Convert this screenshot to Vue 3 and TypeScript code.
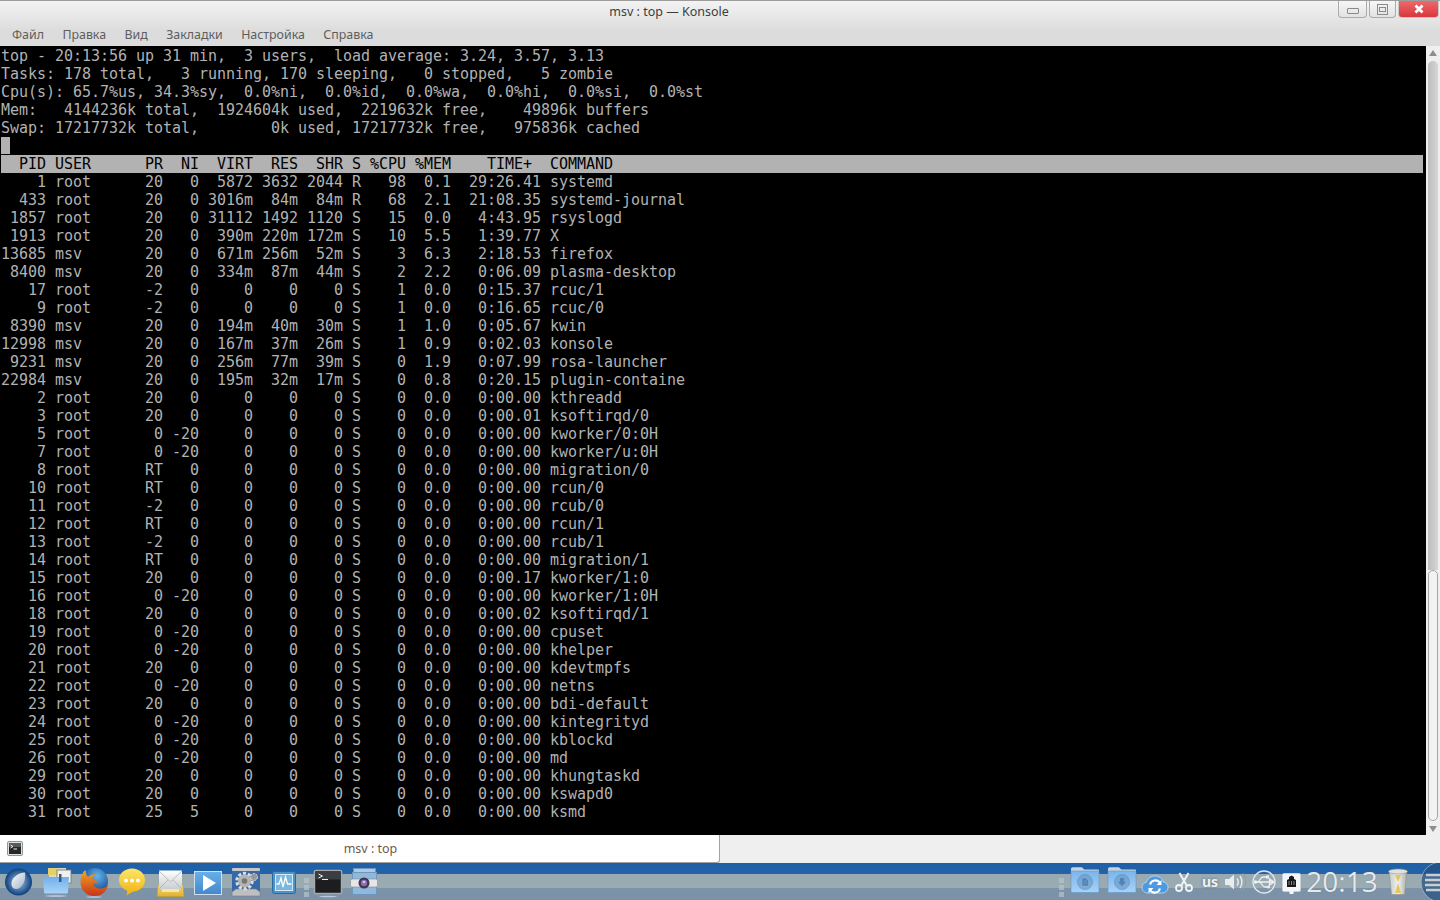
<script setup lang="ts">
const menus: string[] = ['Файл', 'Правка', 'Вид', 'Закладки', 'Настройка', 'Справка']

const summary: string[] = [
  'top - 20:13:56 up 31 min,  3 users,  load average: 3.24, 3.57, 3.13',
  'Tasks: 178 total,   3 running, 170 sleeping,   0 stopped,   5 zombie',
  'Cpu(s): 65.7%us, 34.3%sy,  0.0%ni,  0.0%id,  0.0%wa,  0.0%hi,  0.0%si,  0.0%st',
  'Mem:   4144236k total,  1924604k used,  2219632k free,    49896k buffers',
  'Swap: 17217732k total,        0k used, 17217732k free,   975836k cached',
]

const header = '  PID USER      PR  NI  VIRT  RES  SHR S %CPU %MEM    TIME+  COMMAND'

const full: string[] = [
  '1 root 20 0 5872 3632 2044 R 98 0.1 29:26.41 systemd',
  '433 root 20 0 3016m 84m 84m R 68 2.1 21:08.35 systemd-journal',
  '1857 root 20 0 31112 1492 1120 S 15 0.0 4:43.95 rsyslogd',
  '1913 root 20 0 390m 220m 172m S 10 5.5 1:39.77 X',
  '13685 msv 20 0 671m 256m 52m S 3 6.3 2:18.53 firefox',
  '8400 msv 20 0 334m 87m 44m S 2 2.2 0:06.09 plasma-desktop',
  '17 root -2 0 0 0 0 S 1 0.0 0:15.37 rcuc/1',
  '9 root -2 0 0 0 0 S 1 0.0 0:16.65 rcuc/0',
  '8390 msv 20 0 194m 40m 30m S 1 1.0 0:05.67 kwin',
  '12998 msv 20 0 167m 37m 26m S 1 0.9 0:02.03 konsole',
  '9231 msv 20 0 256m 77m 39m S 0 1.9 0:07.99 rosa-launcher',
  '22984 msv 20 0 195m 32m 17m S 0 0.8 0:20.15 plugin-containe',
]

const kernel: [number, string, string, string, string][] = [
  [2, '20', '0', '0:00.00', 'kthreadd'],
  [3, '20', '0', '0:00.01', 'ksoftirqd/0'],
  [5, '0', '-20', '0:00.00', 'kworker/0:0H'],
  [7, '0', '-20', '0:00.00', 'kworker/u:0H'],
  [8, 'RT', '0', '0:00.00', 'migration/0'],
  [10, 'RT', '0', '0:00.00', 'rcun/0'],
  [11, '-2', '0', '0:00.00', 'rcub/0'],
  [12, 'RT', '0', '0:00.00', 'rcun/1'],
  [13, '-2', '0', '0:00.00', 'rcub/1'],
  [14, 'RT', '0', '0:00.00', 'migration/1'],
  [15, '20', '0', '0:00.17', 'kworker/1:0'],
  [16, '0', '-20', '0:00.00', 'kworker/1:0H'],
  [18, '20', '0', '0:00.02', 'ksoftirqd/1'],
  [19, '0', '-20', '0:00.00', 'cpuset'],
  [20, '0', '-20', '0:00.00', 'khelper'],
  [21, '20', '0', '0:00.00', 'kdevtmpfs'],
  [22, '0', '-20', '0:00.00', 'netns'],
  [23, '20', '0', '0:00.00', 'bdi-default'],
  [24, '0', '-20', '0:00.00', 'kintegrityd'],
  [25, '0', '-20', '0:00.00', 'kblockd'],
  [26, '0', '-20', '0:00.00', 'md'],
  [29, '20', '0', '0:00.00', 'khungtaskd'],
  [30, '20', '0', '0:00.00', 'kswapd0'],
  [31, '25', '5', '0:00.00', 'ksmd'],
]

function fmt(p: string[]): string {
  const [pid, user, pr, ni, virt, res, shr, s, cpu, mem, time, cmd] = p
  return (
    pid.padStart(5) + ' ' + user.padEnd(9) + pr.padStart(3) + ' ' + ni.padStart(3) + ' ' +
    virt.padStart(5) + ' ' + res.padStart(4) + ' ' + shr.padStart(4) + ' ' + s + ' ' +
    cpu.padStart(4) + ' ' + mem.padStart(4) + ' ' + time.padStart(9) + ' ' + cmd
  )
}

const rows: string[] = [
  ...full.map((r) => fmt(r.split(' '))),
  ...kernel.map(([pid, pr, ni, time, cmd]) =>
    fmt([String(pid), 'root', pr, ni, '0', '0', '0', 'S', '0', '0.0', time, cmd]),
  ),
]
</script>

<template>
  <div class="win">
    <header class="chrome">
      <div class="titlebar">
        <div class="title">msv : top — Konsole</div>
        <div class="wbtns">
          <div class="wbtn min"><span class="min-glyph"></span></div>
          <div class="wbtn max"><span class="max-glyph"><span></span></span></div>
          <div class="wbtn close">
            <svg width="10" height="10" viewBox="0 0 10 10">
              <path d="M1.5 1.5 8.5 8.5M8.5 1.5 1.5 8.5" stroke="#fff" stroke-width="2.8" fill="none" />
            </svg>
          </div>
        </div>
      </div>
      <nav class="menu">
        <span v-for="m in menus" :key="m">{{ m }}</span>
      </nav>
    </header>

    <main class="body">
      <section class="term">
        <div v-for="l in summary" :key="l" class="ln">{{ l }}</div>
        <div class="ln"><span class="cursor"> </span></div>
        <div class="ln head">{{ header }}</div>
        <div v-for="r in rows" :key="r" class="ln">{{ r }}</div>
      </section>
      <aside class="scroll">
        <div class="arrow up"></div>
        <div class="groove"></div>
        <div class="thumb"></div>
        <div class="arrow down"></div>
      </aside>
    </main>

    <div class="tabs">
      <div class="tab">
        <svg class="tabicon" width="16" height="15" viewBox="0 0 16 15">
          <rect x="0.5" y="0.5" width="15" height="14" rx="1.5" fill="#dfe1e1" stroke="#8f9496" />
          <rect x="2" y="2" width="12" height="11" fill="#24282b" />
          <rect x="2" y="2" width="12" height="4" fill="#565b5f" />
          <path d="M3.500 4 6 5.500 3.500 7M6.500 8H10" stroke="#f0f0f0" fill="none" />
        </svg>
        <span class="tabtext">msv : top</span>
      </div>
    </div>

    <footer class="panel">
      <div class="group">
        <svg class="i w37" viewBox="0 0 37 37">
          <defs>
            <radialGradient id="orb" cx="0.5" cy="0.5" r="0.55">
              <stop offset="0.35" stop-color="#6a93bd" />
              <stop offset="0.8" stop-color="#1d4f8c" />
              <stop offset="1" stop-color="#12325c" />
            </radialGradient>
            <linearGradient id="crescent" x1="0" y1="0" x2="1" y2="1">
              <stop offset="0" stop-color="#fff" />
              <stop offset="1" stop-color="#9fb2c6" />
            </linearGradient>
          </defs>
          <circle cx="18.5" cy="19" r="13.5" fill="url(#orb)" />
          <path d="M25 9.500c1 6-1 13-6.500 16-4.500 1.500-7.500-1.500-7-5.500.5-5.500 6.500-10 13.500-10.500z" fill="url(#crescent)" />
        </svg>

        <svg class="i w38" viewBox="0 0 38 37">
          <defs>
            <linearGradient id="fold" x1="0" y1="0" x2="0" y2="1">
              <stop offset="0" stop-color="#6fb0ec" />
              <stop offset="1" stop-color="#a9d3f7" />
            </linearGradient>
          </defs>
          <rect x="12" y="5" width="17" height="13" fill="#d9d9c8" />
          <rect x="11" y="5" width="9" height="7" fill="#e4cf6c" />
          <rect x="20" y="7" width="14" height="13" fill="#f0f0f0" stroke="#776" stroke-width="0.8" />
          <path d="M6 14h26l-1 15a1.500 1.500 0 0 1-1.500 1.500H8.500A1.500 1.500 0 0 1 7 29z" fill="url(#fold)" />
          <rect x="22" y="11" width="2.500" height="8" fill="#3e5a78" />
          <ellipse cx="19" cy="33" rx="11" ry="0.8" fill="#cfe3f2" opacity="0.8" />
        </svg>

        <svg class="i w38" viewBox="0 0 38 37">
          <defs>
            <radialGradient id="ffb" cx="0.6" cy="0.3" r="0.6">
              <stop offset="0" stop-color="#62b6ea" />
              <stop offset="1" stop-color="#1b4b94" />
            </radialGradient>
            <linearGradient id="ffo" x1="0" y1="0" x2="0" y2="1">
              <stop offset="0" stop-color="#f2a522" />
              <stop offset="1" stop-color="#c8341a" />
            </linearGradient>
          </defs>
          <circle cx="19.500" cy="18.500" r="13.500" fill="url(#ffb)" />
          <path d="M9 8C7 11 5.500 14 5.500 19c0 8 6 14 14 14 7.500 0 12.500-5 13.500-11-2 2.500-5 4-8.500 3.500-4-.5-6.500-3-6.500-5 2 .2 4.500-.2 5-2-2-1.500-5-1-5.500-3 .5-2 2.500-3 4-4-3-1-6.500.5-8.500 2.500C11.500 12 10.500 10.500 11 7.500z" fill="url(#ffo)" />
          <ellipse cx="19" cy="34" rx="8" ry="0.7" fill="#d8e6ee" opacity="0.7" />
        </svg>

        <svg class="i w38" viewBox="0 0 38 37">
          <defs>
            <linearGradient id="bub" x1="0" y1="0" x2="0" y2="1">
              <stop offset="0" stop-color="#ffe768" />
              <stop offset="1" stop-color="#f0b010" />
            </linearGradient>
          </defs>
          <path d="M19 5.500c7.200 0 13 5 13 11.500S26.200 28.500 21 28.500c-2 0-3 2-8 4 1.200-2 1.500-3.500 1-5C9 25.500 6 21.500 6 17 6 10.500 11.800 5.500 19 5.500z" fill="url(#bub)" />
          <circle cx="13" cy="17.500" r="2" fill="#fff" />
          <circle cx="19" cy="17.500" r="2" fill="#fff" />
          <circle cx="25" cy="17.500" r="2" fill="#fff" />
        </svg>

        <svg class="i w38" viewBox="0 0 38 37">
          <defs>
            <linearGradient id="env" x1="0" y1="0" x2="0" y2="1">
              <stop offset="0" stop-color="#fff" />
              <stop offset="1" stop-color="#c8cccc" />
            </linearGradient>
            <linearGradient id="tray" x1="0" y1="0" x2="0" y2="1">
              <stop offset="0" stop-color="#f8da70" />
              <stop offset="1" stop-color="#e0b030" />
            </linearGradient>
          </defs>
          <path d="M7 22 6 33.500H33L32 22z" fill="url(#tray)" stroke="#c89a20" stroke-width="0.6" />
          <rect x="8" y="7.500" width="23" height="19" fill="url(#env)" />
          <path d="M8 8 19.500 19 31 8M8 26l9-9M31 26l-9-9" stroke="#aab0b2" stroke-width="0.8" fill="none" />
          <rect x="11" y="26" width="17" height="3" fill="#f6e6a8" />
        </svg>

        <svg class="i w38" viewBox="0 0 38 37">
          <defs>
            <linearGradient id="play" x1="0" y1="0" x2="0" y2="1">
              <stop offset="0" stop-color="#68b0e8" />
              <stop offset="1" stop-color="#4488cc" />
            </linearGradient>
          </defs>
          <rect x="5.500" y="8.500" width="27" height="23" fill="url(#play)" stroke="#cfe1f0" />
          <path d="M14 12 27 20 14 28z" fill="#fff" />
        </svg>

        <svg class="i w38" viewBox="0 0 38 37">
          <path d="M5 8h28v23H5z" fill="#3569a8" />
          <rect x="5" y="5" width="28" height="3" rx="1" fill="#c8c8c8" />
          <path d="M9 26h20l4 3v4H5v-4z" fill="#bfbfbf" stroke="#7c7c7c" stroke-width="0.6" />
          <circle cx="17.500" cy="18" r="7.500" fill="none" stroke="#dcdcdc" stroke-width="3.500" stroke-dasharray="3 1.800" />
          <circle cx="17.500" cy="18" r="6.500" fill="#b4b4b4" />
          <circle cx="17.500" cy="18" r="2.800" fill="#777" />
          <circle cx="27" cy="14" r="3.500" fill="#999" stroke="#ddd" stroke-dasharray="2 1" />
        </svg>

        <svg class="i w38" viewBox="0 0 38 37">
          <rect x="7.500" y="8.500" width="23" height="22" rx="2" fill="#4d93c8" stroke="#2a6a9e" />
          <rect x="10.500" y="11.500" width="17" height="16" fill="#7ab6df" stroke="#d4e8f5" />
          <path d="M11.500 21H14l2-6 2 9 2.500-10 2 7h4" stroke="#fff" stroke-width="1.300" fill="none" />
        </svg>

        <div class="sep sep-l"><i></i><i></i><i></i></div>

        <svg class="i w36" viewBox="0 0 36 37">
          <rect x="4.500" y="7.500" width="27" height="23" rx="1" fill="#1b1d1f" stroke="#a8a8a8" stroke-width="1.500" />
          <rect x="5.500" y="8.500" width="25" height="8" fill="#3a3e42" />
          <path d="M8.500 11 12.500 13 8.500 15M12 16.500h6" stroke="#f0f0f0" fill="none" />
          <ellipse cx="18" cy="33.500" rx="9" ry="0.7" fill="#cfe3f2" opacity="0.7" />
        </svg>

        <svg class="i w36" viewBox="0 0 36 37">
          <rect x="7.500" y="5.500" width="22" height="7" fill="#a9cbe8" stroke="#6f95b8" />
          <rect x="6.500" y="9.500" width="24" height="22" fill="#8fb8dc" stroke="#6f95b8" />
          <rect x="4.500" y="16" width="27" height="8" rx="1.500" fill="#e6e6e6" stroke="#888" stroke-width="0.6" />
          <circle cx="18" cy="20" r="5.500" fill="#3c3850" />
          <circle cx="18" cy="20" r="3.200" fill="#8e6bb0" />
          <circle cx="18" cy="19" r="1.300" fill="#d9c3ea" />
        </svg>
      </div>

      <div class="group">
        <div class="sep sep-r"><i></i><i></i><i></i></div>

        <svg class="i w36" viewBox="0 2 36 37">
          <defs>
            <linearGradient id="pf" x1="0" y1="0" x2="0" y2="1">
              <stop offset="0" stop-color="#7ab5ea" />
              <stop offset="1" stop-color="#a8d2f6" />
            </linearGradient>
          </defs>
          <path d="M4 8c0-1 .8-1.800 1.800-1.800h9l2.500 2.300H31a1 1 0 0 1 1 1v3H4z" fill="#c4d5e2" />
          <rect x="4" y="10" width="28" height="21.500" rx="1" fill="url(#pf)" stroke="#5f98cc" stroke-width="0.6" />
          <circle cx="18" cy="21" r="7.500" fill="#5e94c6" opacity="0.55" stroke="#5283b2" />
          <path d="M15 17h4l2.500 2.500V25H15zM17 20h2.500M17 22h2.500" fill="#5283b2" stroke="#8cb6dc" stroke-width="0.5" />
        </svg>

        <svg class="i w37" viewBox="-1 2 37 37">
          <path d="M4 8c0-1 .8-1.800 1.800-1.800h9l2.500 2.300H31a1 1 0 0 1 1 1v3H4z" fill="#c4d5e2" />
          <rect x="4" y="10" width="28" height="21.500" rx="1" fill="url(#pf)" stroke="#5f98cc" stroke-width="0.6" />
          <circle cx="18" cy="21" r="7.500" fill="#5e94c6" opacity="0.55" stroke="#5283b2" />
          <path d="M15.500 16.500h5v4H23L18 25.500 13 20.500h2.500z" fill="#5283b2" stroke="#8cb6dc" stroke-width="0.5" />
        </svg>

        <svg class="i w30" viewBox="0 1 30 37">
          <path d="M8 31c-3.500 0-6-2.500-6-5.500 0-2.800 2-5 4.500-5.400C7.500 16.500 11 14 15 14c4.200 0 7.500 2.600 8.400 6 2.800.3 4.600 2.800 4.600 5.500 0 3-2.500 5.500-5.500 5.500z" fill="#4d9ae0" stroke="#d5e8f8" stroke-width="0.7" />
          <path d="M10 22.500A5.500 5.500 0 0 1 20 21M20 26.500a5.500 5.500 0 0 1-10 1.500" stroke="#fff" stroke-width="2" fill="none" />
          <path d="M21.500 18v5h-5zM8.500 31v-5h5z" fill="#fff" />
        </svg>

        <svg class="i w28" viewBox="0 0 28 37">
          <path d="M9.500 10 17 23M18.500 10 11 23" stroke="#f0f3f5" stroke-width="2" fill="none" />
          <circle cx="9" cy="25" r="3" fill="none" stroke="#f0f3f5" stroke-width="1.800" />
          <circle cx="19" cy="25" r="3" fill="none" stroke="#f0f3f5" stroke-width="1.800" />
        </svg>

        <div class="lang">us</div>

        <svg class="i w26" viewBox="0 0 26 37">
          <path d="M3 16h4l5-4.500V26.500L7 22H3z" fill="#e8ecee" />
          <path d="M15 15.500c1.500 2 1.500 5 0 7M18 13c2.500 3.500 2.500 8.500 0 12" stroke="#e8ecee" stroke-width="1.400" fill="none" />
          <path d="M21 10.500c3.500 5 3.500 12 0 17" stroke="#8fa0ad" stroke-width="1" fill="none" />
        </svg>

        <svg class="i w32" viewBox="0 0 32 37">
          <circle cx="16" cy="19" r="11" fill="none" stroke="#dfe5e8" stroke-width="1.300" />
          <path d="M6 19H25M21.500 16 26 19 21.500 22zM9 19C12 19 12 14 15 14H18M11 19C14 19 14 24 17 24H19" stroke="#eef1f3" stroke-width="1.300" fill="none" />
          <circle cx="7.500" cy="19" r="1.800" fill="#eef1f3" />
          <rect x="18" y="12.500" width="3" height="3" fill="#eef1f3" />
          <circle cx="20.500" cy="24" r="1.500" fill="#eef1f3" />
        </svg>

        <svg class="i w24" viewBox="0 2 24 37">
          <rect x="2.500" y="12.500" width="18" height="18" rx="1.500" fill="#f4f6f7" stroke="#c8d0d5" />
          <path d="M7 26V19l2-1v-2l2.500-1.500L14 16v2l2 1v7z" fill="#16181a" />
          <path d="M9 20v4M11.500 20v4M14 20v4" stroke="#d0d0d0" stroke-width="0.6" />
          <path d="M9.500 30h4v3h-4z" fill="#f4f6f7" />
        </svg>

        <div class="clock">20:13</div>

        <svg class="i w36" viewBox="0 0 36 37">
          <defs>
            <linearGradient id="bin" x1="0" y1="0" x2="1" y2="0">
              <stop offset="0" stop-color="#c6c9c4" />
              <stop offset="0.5" stop-color="#f0f2ee" />
              <stop offset="1" stop-color="#a8aeaa" />
            </linearGradient>
          </defs>
          <path d="M9 8h18l-2.500 23.500h-13z" fill="url(#bin)" stroke="#8d928e" stroke-width="0.6" />
          <ellipse cx="18" cy="8.500" rx="9.500" ry="2.500" fill="#dfe2de" stroke="#8d928e" stroke-width="0.6" />
          <path d="M15 12h6l-3 7zM15 30l3-10 3 10z" fill="#e9c65c" />
        </svg>

        <svg class="i w24" viewBox="0 0 24 37">
          <circle cx="25" cy="19" r="20" fill="#204f80" stroke="#aab6c0" stroke-width="1" opacity="0.7" />
          <path d="M10 12h14M9 17h15M9 22h15M10 27h14" stroke="#c8ced2" stroke-width="2.500" />
        </svg>
      </div>
    </footer>
  </div>
</template>

<style>
html,
body {
  margin: 0;
  overflow: hidden;
}
</style>

<style scoped>
.win {
  width: 1440px;
  height: 900px;
  display: flex;
  flex-direction: column;
  overflow: hidden;
  font-family: "Noto Sans", sans-serif;
}
.chrome {
  height: 46px;
  flex: none;
  box-sizing: border-box;
  border-top: 1px solid #9c9c9c;
  background: linear-gradient(#f3f3f3, #dcdcdc 30px);
  display: flex;
  flex-direction: column;
}
.titlebar {
  height: 25px;
  display: flex;
  align-items: flex-start;
}
.title {
  flex: 1;
  text-align: center;
  font-size: 12.5px;
  line-height: 21px;
  color: #3d3d3d;
}
.wbtns {
  display: flex;
  gap: 2px;
  padding-right: 1px;
}
.wbtn {
  height: 17px;
  box-sizing: border-box;
  border: 1px solid #ababab;
  border-top: none;
  border-radius: 0 0 4px 4px;
  background: linear-gradient(#f6f6f6, #e2e2e2);
  display: flex;
  align-items: center;
  justify-content: center;
}
.min {
  width: 29px;
}
.max {
  width: 27px;
}
.close {
  width: 41px;
  background: linear-gradient(#ee6a6a, #d8363c);
  border-color: #c9c9c9;
}
.min-glyph {
  width: 10px;
  height: 4px;
  margin-top: 3px;
  border: 1px solid #8a8a8a;
  border-radius: 1px;
}
.max-glyph {
  width: 9px;
  height: 9px;
  border: 1px solid #8a8a8a;
  display: flex;
  align-items: center;
  justify-content: center;
}
.max-glyph span {
  width: 5px;
  height: 3px;
  border: 1px solid #8a8a8a;
}
.menu {
  height: 20px;
  display: flex;
  gap: 18.4px;
  padding-left: 12px;
  font-size: 12.4px;
  line-height: 18px;
  color: #5e5e5e;
}
.body {
  height: 789px;
  flex: none;
  display: flex;
}
.term {
  width: 1426px;
  box-sizing: border-box;
  padding: 1px 3px 0 1px;
  background: #000;
  color: #b2b2b2;
  font-family: "DejaVu Sans Mono", monospace;
  font-size: 15px;
  letter-spacing: -0.03px;
  line-height: 18px;
}
.ln {
  height: 18px;
  white-space: pre;
}
.head {
  background: #b2b2b2;
  color: #000;
}
.cursor {
  display: inline-block;
  width: 9px;
  height: 17px;
  vertical-align: top;
  background: #b2b2b2;
}
.scroll {
  flex: 1;
  background: #efefef;
  display: flex;
  flex-direction: column;
  align-items: center;
}
.arrow {
  width: 0;
  height: 0;
  border-left: 4.500px solid transparent;
  border-right: 4.500px solid transparent;
}
.up {
  margin-top: 4px;
  margin-bottom: 5px;
  border-bottom: 6px solid #8e8e8e;
}
.down {
  margin-bottom: 3px;
  border-top: 6px solid #8e8e8e;
}
.groove {
  width: 10px;
  flex: 1;
  border-radius: 5px 5px 0 0;
  background: linear-gradient(90deg, #bdbdbd, #d6d6d6);
}
.thumb {
  width: 10px;
  height: 251px;
  flex: none;
  box-sizing: border-box;
  border: 1px solid #a6a6a6;
  border-radius: 5px;
  background: #f2f2f2;
  margin-bottom: 5px;
}
.tabs {
  height: 28px;
  flex: none;
  background: #efefef;
}
.tab {
  width: 720px;
  height: 28px;
  box-sizing: border-box;
  padding-bottom: 1px;
  background: #fff;
  border-right: 1px solid #a2a2a2;
  border-bottom: 1px solid #a2a2a2;
  border-bottom-right-radius: 3px;
  display: flex;
  align-items: center;
}
.tabicon {
  margin-left: 7px;
  flex: none;
}
.tabtext {
  flex: 1;
  text-align: center;
  padding-right: 1px;
  font-size: 12.5px;
  color: #6d5a4e;
}
.panel {
  height: 37px;
  flex: 1;
  display: flex;
  justify-content: space-between;
  background: linear-gradient(#1f5fa6 0, #2363a8 11px, #98a9b1 11px, #9aabb1 25px, #7c93a8 25px, #7a91a7 100%);
}
.group {
  display: flex;
  align-items: stretch;
}
.i {
  height: 37px;
  flex: none;
  display: block;
}
.w24 {
  width: 24px;
}
.w26 {
  width: 26px;
}
.w28 {
  width: 28px;
}
.w30 {
  width: 30px;
}
.w32 {
  width: 32px;
}
.w36 {
  width: 36px;
}
.w37 {
  width: 37px;
}
.w38 {
  width: 38px;
}
.sep {
  display: flex;
  flex-direction: column;
  align-items: center;
  gap: 2px;
  padding-top: 15px;
  box-sizing: border-box;
}
.sep i {
  width: 5px;
  height: 5px;
  background: #b8c4ca;
  opacity: 0.7;
}
.sep-l {
  width: 7px;
}
.sep-r {
  width: 12px;
}
.lang {
  width: 24px;
  text-align: center;
  font-size: 14px;
  font-weight: 700;
  line-height: 37px;
  color: #eef1f3;
  text-shadow: 0 0 3px #5a6a78;
}
.clock {
  width: 76px;
  text-align: center;
  font-family: "Open Sans", sans-serif;
  font-weight: 400;
  font-size: 28px;
  line-height: 36px;
  color: #e6eaed;
  text-shadow: 0 0 1px #5a6a7a;
}
</style>
